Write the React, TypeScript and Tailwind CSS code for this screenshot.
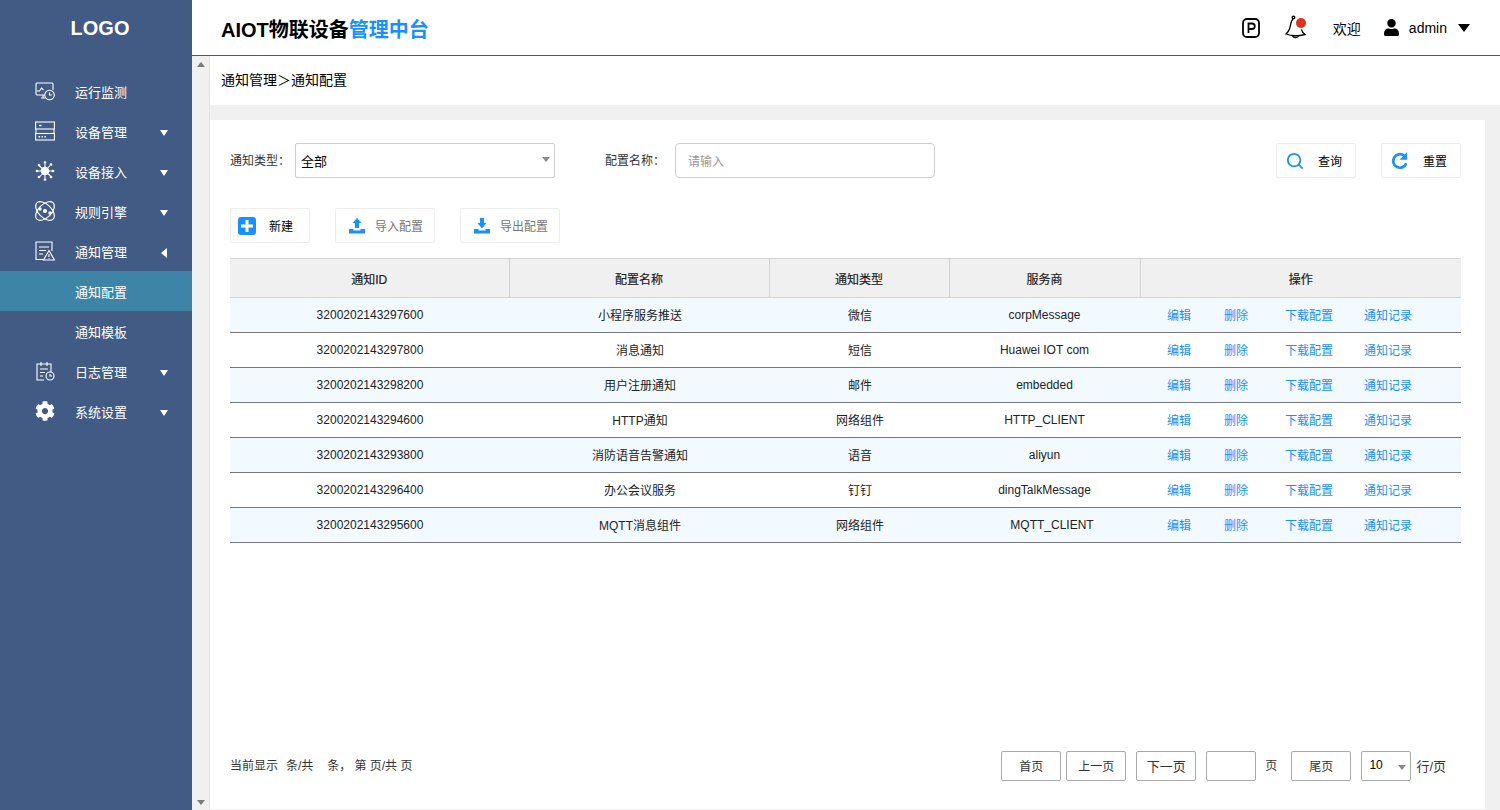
import { FaCog, FaUser } from "react-icons/fa";

const FONT = "[font-family:'Liberation_Sans','Noto_Sans_CJK_SC',sans-serif]";

function MonitorIcon() {
  return (
    <svg width="20" height="20" viewBox="0 0 20 20" fill="none" stroke="white" strokeWidth="1.1">
      <path d="M9 14H2a1 1 0 0 1-1-1V3a1 1 0 0 1 1-1h15a1 1 0 0 1 1 1v6" />
      <path d="M1.500 10h3l2-3 2 2" />
      <path d="M6 17h4M8 14v3" />
      <circle cx="14.500" cy="14" r="4.800" fill="#415b85" />
      <path d="M14.500 11.500V14h2.500" />
    </svg>
  );
}

function ServerIcon() {
  return (
    <svg width="20" height="20" viewBox="0 0 20 20" fill="none" stroke="white" strokeWidth="1.1">
      <rect x="0.600" y="1" width="18.800" height="7" />
      <rect x="0.600" y="12.500" width="18.800" height="6.500" />
      <path d="M1 8v4.500M19 8v4.500" />
      <path d="M4 4.500h2.500M3.500 15.700h1.500M6.500 15.700h1.500M9.500 15.700h1.500" strokeWidth="1.500" />
    </svg>
  );
}

function AccessIcon() {
  return (
    <svg width="20" height="20" viewBox="0 0 20 20" fill="white" stroke="white" strokeWidth="1.100">
      <circle cx="10" cy="10" r="3.800" />
      <path d="M10 10 3 10M10 10 17 10M10 10 4.500 5M10 10 15.500 15M10 10 15 4.500M10 10 5 15.500M10 10 10 3M10 10 10 17" />
      <circle cx="2" cy="10" r="0.800" />
      <circle cx="18" cy="10" r="0.800" />
      <circle cx="4" cy="4" r="0.800" />
      <circle cx="16" cy="16" r="0.800" />
      <circle cx="16" cy="3.500" r="0.800" />
      <circle cx="4" cy="16" r="0.800" />
      <circle cx="10" cy="1.500" r="0.800" />
      <circle cx="10" cy="18.500" r="0.800" />
    </svg>
  );
}

function RuleIcon() {
  return (
    <svg width="20" height="20" viewBox="0 0 20 20" fill="none" stroke="white" strokeWidth="1.1" className="overflow-visible">
      <ellipse cx="10" cy="10" rx="11.500" ry="6.500" transform="rotate(45 10 10)" />
      <ellipse cx="10" cy="10" rx="11.500" ry="6.500" transform="rotate(-45 10 10)" />
      <circle cx="10" cy="10" r="1.500" fill="white" />
      <circle cx="5" cy="8" r="1.100" fill="white" />
      <circle cx="15" cy="12" r="1.100" fill="white" />
    </svg>
  );
}

function NoticeIcon() {
  return (
    <svg width="20" height="20" viewBox="0 0 20 20" fill="none" stroke="white" strokeWidth="1.100">
      <path d="M9 18.500H1V1h16v9" />
      <path d="M4 6h10M4 9.500h7M4 13h4" />
      <path d="M14 9.500l5.500 9.500h-11z" fill="#415b85" />
      <path d="M14 13v3M14 17v.8" />
    </svg>
  );
}

function LogIcon() {
  return (
    <svg width="20" height="20" viewBox="0 0 20 20" fill="none" stroke="white" strokeWidth="1.100">
      <path d="M9 19H2V3h14v8" />
      <path d="M6 1v4M12 1v4M5 8h8M5 11.500h5M5 15h3" />
      <circle cx="15" cy="15" r="4" fill="#415b85" />
      <path d="M15 13v2h2" />
    </svg>
  );
}

function Caret({ open }: { open?: boolean }) {
  if (open) {
    return <span className="border-y-[5px] border-r-[6px] border-y-transparent border-r-white mr-[1px] mt-[4px]" />;
  }
  return <span className="border-x-[4px] border-t-[6px] border-x-transparent border-t-white mt-[4px]" />;
}

function SideItem({ icon, label, arrow, open, active }: { icon?: React.ReactNode; label: string; arrow?: boolean; open?: boolean; active?: boolean }) {
  return (
    <div className={`h-10 flex items-center pl-[35px] pr-6 text-white text-[13px] ${active ? "bg-[#3e84a6]" : ""}`}>
      <div className="w-5 h-5 mr-5 flex items-center justify-center shrink-0">{icon}</div>
      <span className="flex-1 pt-[3px]">{label}</span>
      {arrow && <Caret open={open} />}
    </div>
  );
}

function Sidebar() {
  return (
    <div className="w-[192px] shrink-0 bg-[#415b85]">
      <div className="h-[71px] pb-[15px] pl-[8px] flex items-center justify-center text-white text-[20px] font-bold">LOGO</div>
      <SideItem icon={<MonitorIcon />} label="运行监测" />
      <SideItem icon={<ServerIcon />} label="设备管理" arrow />
      <SideItem icon={<AccessIcon />} label="设备接入" arrow />
      <SideItem icon={<RuleIcon />} label="规则引擎" arrow />
      <SideItem icon={<NoticeIcon />} label="通知管理" arrow open />
      <SideItem label="通知配置" active />
      <SideItem label="通知模板" />
      <SideItem icon={<LogIcon />} label="日志管理" arrow />
      <SideItem icon={<FaCog size={20} color="white" />} label="系统设置" arrow />
    </div>
  );
}

function Header() {
  return (
    <div className="h-[56px] shrink-0 border-b border-[#415b85] bg-white flex items-center pl-[29px] pr-[30px]">
      <div className="text-[20px] font-bold text-black flex-1 pt-[4px]">
        AIOT物联设备<span className="text-[#1890ff]">管理中台</span>
      </div>
      <svg width="20" height="20" viewBox="0 0 20 20" fill="none" stroke="black" strokeWidth="1.800" className="mr-[23px]">
        <rect x="2" y="1" width="16" height="18" rx="4" />
        <path d="M7.500 15V5.500h3.500a2.700 2.700 0 0 1 0 5.500H7.500" />
      </svg>
      <svg width="24" height="26" viewBox="0 0 24 26" fill="none" stroke="black" strokeWidth="1.300" className="mr-[25px] -mt-[2px]">
        <path d="M9 5C6.500 7 7 11 5.500 15c-.7 2-2 3.500-3.500 5 5 2 13 2 19 .5-1.500-1-3-3-3.500-5" />
        <circle cx="9.500" cy="3.500" r="1.300" />
        <path d="M8.500 21.500c.5 2.500 4.500 3 6 .5" />
        <circle cx="17" cy="9" r="5" fill="#e0301e" stroke="none" />
      </svg>
      <span className="text-[14px] text-black mr-[22px] pt-[4px]">欢迎</span>
      <FaUser size={17} color="black" className="mr-[9px]" />
      <span className="text-[14px] text-black mr-[11px] pt-[2px]">admin</span>
      <span className="border-x-[6.5px] border-t-[8px] border-x-transparent border-t-black" />
    </div>
  );
}

function ScrollBar() {
  return (
    <div className="w-[18px] shrink-0 bg-[#f0f0f0] border-r border-[#e4e4e4] flex flex-col items-center justify-between pt-[6px] pb-[5px]">
      <span className="border-x-[4px] border-b-[5px] border-x-transparent border-b-[#7a7a7a]" />
      <span className="border-x-[4px] border-t-[5px] border-x-transparent border-t-[#7a7a7a]" />
    </div>
  );
}

function ToolButton({ icon, label, box, dim }: { icon: React.ReactNode; label: string; box: string; dim?: boolean }) {
  return (
    <button className={`h-[35px] border border-[#ededed] rounded-[2px] bg-white flex items-center text-[12px] ${box} ${dim ? "text-[#777]" : "text-black"}`}>
      {icon}
      <span className="pt-[3px]">{label}</span>
    </button>
  );
}

const rows = [
  ["3200202143297600", "小程序服务推送", "微信", "corpMessage"],
  ["3200202143297800", "消息通知", "短信", "Huawei IOT com"],
  ["3200202143298200", "用户注册通知", "邮件", "embedded"],
  ["3200202143294600", "HTTP通知", "网络组件", "HTTP_CLIENT"],
  ["3200202143293800", "消防语音告警通知", "语音", "aliyun"],
  ["3200202143296400", "办公会议服务", "钉钉", "dingTalkMessage"],
  ["3200202143295600", "MQTT消息组件", "网络组件", "MQTT_CLIENT"],
];

function DataTable() {
  return (
    <table className="w-[1231px] table-fixed border-collapse text-[12px] text-[#222]">
      <colgroup>
        <col className="w-[279px]" />
        <col className="w-[260px]" />
        <col className="w-[180px]" />
        <col className="w-[191px]" />
        <col className="w-[321px]" />
      </colgroup>
      <thead>
        <tr className="h-[39px] bg-[#f0f0f0] border-y border-[#d4d4d4]">
          {["通知ID", "配置名称", "通知类型", "服务商", "操作"].map((h, i) => (
            <th key={h} className={`font-normal text-center pt-[3px] [-webkit-text-stroke:0.2px] ${i < 4 ? "border-r border-[#d4d4d4]" : ""}`}>{h}</th>
          ))}
        </tr>
      </thead>
      <tbody>
        {rows.map((r, i) => (
          <tr key={r[0]} className={`h-[35px] border-b border-[#74787c] ${i % 2 === 0 ? "bg-[#f2f9ff]" : "bg-white"}`}>
            <td className="text-center pl-[1px]">{r[0]}</td>
            <td className="text-center pt-[2px] pl-[2px]">{r[1]}</td>
            <td className="text-center pt-[2px] pl-[2px]">{r[2]}</td>
            <td className={`text-center ${r[3] === "MQTT_CLIENT" ? "pl-[15px]" : "pl-0"}`}>{r[3]}</td>
            <td className="pl-[27px] pt-[2px] text-[#1890ff]">
              <div className="flex">
                <span className="mr-[33px]">编辑</span>
                <span className="mr-[37px]">删除</span>
                <span className="mr-[31px]">下载配置</span>
                <span>通知记录</span>
              </div>
            </td>
          </tr>
        ))}
      </tbody>
    </table>
  );
}

function Pager() {
  const btn = "h-[30px] border border-[#a9a9a9] rounded-[2px] bg-white flex items-center justify-center pt-[2px] text-[12px] text-[#333]";
  return (
    <div className="flex items-center justify-between text-[12px] text-[#333] pr-[15px]">
      <div className="flex">
        <span>当前显示</span>
        <span className="ml-[8px]">条/共</span>
        <span className="ml-[14px]">条，</span>
        <span className="ml-[3px]">第 页/共 页</span>
      </div>
      <div className="flex items-center">
        <div className={`${btn} w-[60px] mr-[5px]`}>首页</div>
        <div className={`${btn} w-[60px] mr-[10px]`}>上一页</div>
        <div className={`${btn} w-[60px] mr-[10px] !text-[13px]`}>下一页</div>
        <div className={`${btn} w-[50px] mr-[9px]`} />
        <span className="mr-[14px]">页</span>
        <div className={`${btn} w-[60px] mr-[10px]`}>尾页</div>
        <div className={`${btn} w-[50px] mr-[5px] !justify-between pl-[7px] pr-[4px] !text-black`}>
          <span className="-mt-[4px]">10</span>
          <span className="border-x-[4px] border-t-[5px] border-x-transparent border-t-[#888]" />
        </div>
        <span className="text-[13px] pt-[2px]">行/页</span>
      </div>
    </div>
  );
}

function Card() {
  return (
    <div className="flex-1 mr-[15px] mb-[1px] bg-white pt-[23px] pl-[20px] pr-[24px] pb-[28px] flex flex-col">
      <div className="flex items-center h-[35px] text-[12px] text-[#333]">
        <span className="w-[65px]">通知类型：</span>
        <div className="w-[260px] h-[35px] border border-[#cfcfcf] rounded-[2px] flex items-center justify-between pl-[5px] pr-[4px] text-[13px] text-black">
          <span className="pt-[3px]">全部</span>
          <span className="border-x-[4.5px] border-t-[5px] border-x-transparent border-t-[#888] -mt-[2px]" />
        </div>
        <span className="ml-[50px] w-[70px]">配置名称：</span>
        <div className="w-[260px] h-[35px] border border-[#cfcfcf] rounded-[4px] flex items-center pl-[12px] pt-[2px] text-[#999]">请输入</div>
        <div className="ml-auto flex gap-[25px]">
          <ToolButton
            box="w-[80px] pl-[9px] gap-[14px]"
            label="查询"
            icon={
              <svg width="18" height="18" viewBox="0 0 20 20" fill="none" stroke="#1890ff" strokeWidth="2">
                <circle cx="9" cy="9" r="7" />
                <path d="M14 14l4.500 4.500" />
              </svg>
            }
          />
          <ToolButton
            box="w-[80px] pl-[9px] gap-[14px]"
            label="重置"
            icon={
              <svg width="18" height="18" viewBox="0 0 20 20" fill="none" stroke="#1890ff" strokeWidth="3">
                <path d="M17 12.500A7.500 7.500 0 1 1 14.500 4" />
                <path d="M18 0v8.500H9.500z" fill="#1890ff" stroke="none" />
              </svg>
            }
          />
        </div>
      </div>
      <div className="flex gap-[25px] mt-[30px] mb-[15px]">
        <ToolButton
          box="w-[80px] pl-[7px] gap-[13px]"
          label="新建"
          icon={
            <span className="w-[18px] h-[18px] rounded-[3px] bg-[#1890ff] flex items-center justify-center">
              <svg width="12" height="12" viewBox="0 0 12 12" stroke="white" strokeWidth="3">
                <path d="M6 0v12M0 6h12" />
              </svg>
            </span>
          }
        />
        <ToolButton
          box="w-[100px] pl-[13px] gap-[10px]"
          label="导入配置"
          dim
          icon={
            <svg width="16" height="16" viewBox="0 0 16 16" fill="#1890ff">
              <path d="M8 0l4.500 5H10v5H6V5H3.500z" />
              <path d="M0 11h4.500v1.500h7V11H16v4.500H0z" />
            </svg>
          }
        />
        <ToolButton
          box="w-[100px] pl-[13px] gap-[10px]"
          label="导出配置"
          dim
          icon={
            <svg width="16" height="16" viewBox="0 0 16 16" fill="#1890ff">
              <path d="M6 0h4v5h2.500L8 10.500 3.500 5H6z" />
              <path d="M0 11h4.500v1.500h7V11H16v4.500H0z" />
            </svg>
          }
        />
      </div>
      <DataTable />
      <div className="mt-auto">
        <Pager />
      </div>
    </div>
  );
}

export default function App() {
  return (
    <div className={`h-screen w-full flex overflow-hidden bg-[#f0f0f0] ${FONT}`}>
      <Sidebar />
      <div className="flex-1 flex flex-col min-w-0">
        <Header />
        <div className="flex-1 flex min-h-0">
          <ScrollBar />
          <div className="flex-1 flex flex-col min-w-0">
            <div className="h-[49px] shrink-0 bg-white flex items-center pl-[11px] text-[14px] text-black">
              通知管理＞通知配置
            </div>
            <div className="h-[15px] shrink-0" />
            <Card />
          </div>
        </div>
      </div>
    </div>
  );
}
